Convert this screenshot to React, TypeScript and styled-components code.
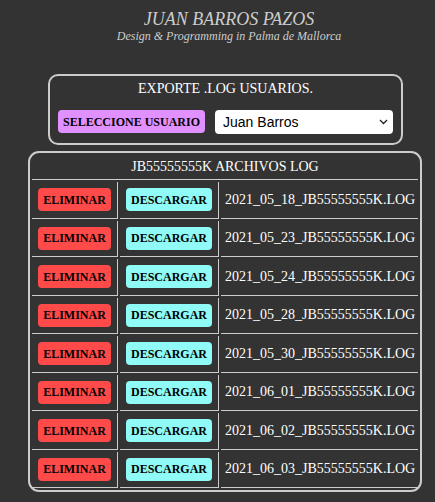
import React from "react";
import styled, { createGlobalStyle } from "styled-components";

const Global = createGlobalStyle`
  html, body { margin: 0; padding: 0; background: #333333; }
  body { font-family: "Liberation Serif", "Times New Roman", serif; color: #ffffff; }
  * { box-sizing: border-box; }
`;

const Page = styled.div`
  width: 435px;
  min-height: 502px;
  background: #333333;
  padding-top: 10px;
  display: flex;
  flex-direction: column;
`;

const Header = styled.header`
  padding-left: 23px;
  text-align: center;
  color: #cccccc;
  font-style: italic;
`;

const Title = styled.div`
  font-size: 18px;
  line-height: 19px;
`;

const Subtitle = styled.div`
  font-size: 12px;
  line-height: 14px;
`;

const ExportBox = styled.section`
  margin: 31px 0 0 48px;
  width: 355px;
  border: 2px solid #cccccc;
  border-radius: 10px;
  padding: 5px 8px 9px;
  display: flex;
  flex-direction: column;
  align-items: stretch;
`;

const BoxTitle = styled.div`
  font-size: 14px;
  line-height: 16px;
  text-align: center;
  color: #ffffff;
`;

const Controls = styled.div`
  margin-top: 13px;
  display: flex;
  align-items: flex-start;
  gap: 10px;
`;

const Btn = styled.button<{ $bg: string }>`
  font-family: "Liberation Serif", "Times New Roman", serif;
  font-weight: bold;
  font-size: 12px;
  line-height: 14px;
  padding: 4.5px 5px;
  border: none;
  border-radius: 4px;
  background: ${(p) => p.$bg};
  color: #000000;
  white-space: nowrap;
  cursor: pointer;
`;

const SelectWrap = styled.div`
  position: relative;
  flex: 1;
`;

const Select = styled.select`
  appearance: none;
  -webkit-appearance: none;
  width: 100%;
  height: 24px;
  border: none;
  border-radius: 4px;
  background: #ffffff;
  color: #000000;
  font-family: "Liberation Sans", Arial, sans-serif;
  font-size: 14px;
  padding: 0 0 0 8px;
  outline: none;
`;

const Chevron = styled.svg`
  position: absolute;
  right: 5px;
  top: 9px;
  width: 9px;
  height: 6px;
  pointer-events: none;
`;

const LogBox = styled.section`
  margin: 6px 0 0 28px;
  width: 394px;
  border: 2px solid #cccccc;
  border-radius: 11px;
`;

const Grid = styled.div`
  display: grid;
  grid-template-columns: 86px 99px 197px;
  gap: 2px;
  padding: 2px;
`;

const HeadCell = styled.div`
  grid-column: 1 / -1;
  height: 25px;
  border-bottom: 1px solid #cccccc;
  padding-top: 3.5px;
  font-size: 14px;
  line-height: 16px;
  text-align: center;
  color: #ffffff;
`;

const Cell = styled.div<{ $divider?: boolean; $center?: boolean }>`
  height: 36.5px;
  border-bottom: 1px solid #cccccc;
  border-right: ${(p) => (p.$divider ? "1px solid #cccccc" : "none")};
  display: flex;
  align-items: center;
  justify-content: ${(p) => (p.$center ? "center" : "flex-start")};
  padding-left: ${(p) => (p.$center ? "0" : "4px")};
  font-size: 14px;
  line-height: 16px;
  color: #ffffff;
  white-space: nowrap;
`;

const dates = [
  "2021_05_18",
  "2021_05_23",
  "2021_05_24",
  "2021_05_28",
  "2021_05_30",
  "2021_06_01",
  "2021_06_02",
  "2021_06_03",
];

const RED = "#ff4a4a";
const CYAN = "#8ffaf6";
const PURPLE = "#e090ff";

export default function App() {
  return (
    <>
      <Global />
      <Page>
        <Header>
          <Title>JUAN BARROS PAZOS</Title>
          <Subtitle>Design &amp; Programming in Palma de Mallorca</Subtitle>
        </Header>
        <ExportBox>
          <BoxTitle>EXPORTE .LOG USUARIOS.</BoxTitle>
          <Controls>
            <Btn $bg={PURPLE}>SELECCIONE USUARIO</Btn>
            <SelectWrap>
              <Select defaultValue="jb">
                <option value="jb">Juan Barros</option>
              </Select>
              <Chevron viewBox="0 0 9 6">
                <path d="M1 1 L4.5 4.5 L8 1" fill="none" stroke="#222" strokeWidth="1.3" />
              </Chevron>
            </SelectWrap>
          </Controls>
        </ExportBox>
        <LogBox>
          <Grid>
            <HeadCell>JB55555555K ARCHIVOS LOG</HeadCell>
            {dates.map((d) => (
              <React.Fragment key={d}>
                <Cell $divider $center>
                  <Btn $bg={RED}>ELIMINAR</Btn>
                </Cell>
                <Cell $divider $center>
                  <Btn $bg={CYAN}>DESCARGAR</Btn>
                </Cell>
                <Cell>{d}_JB55555555K.LOG</Cell>
              </React.Fragment>
            ))}
          </Grid>
        </LogBox>
      </Page>
    </>
  );
}
